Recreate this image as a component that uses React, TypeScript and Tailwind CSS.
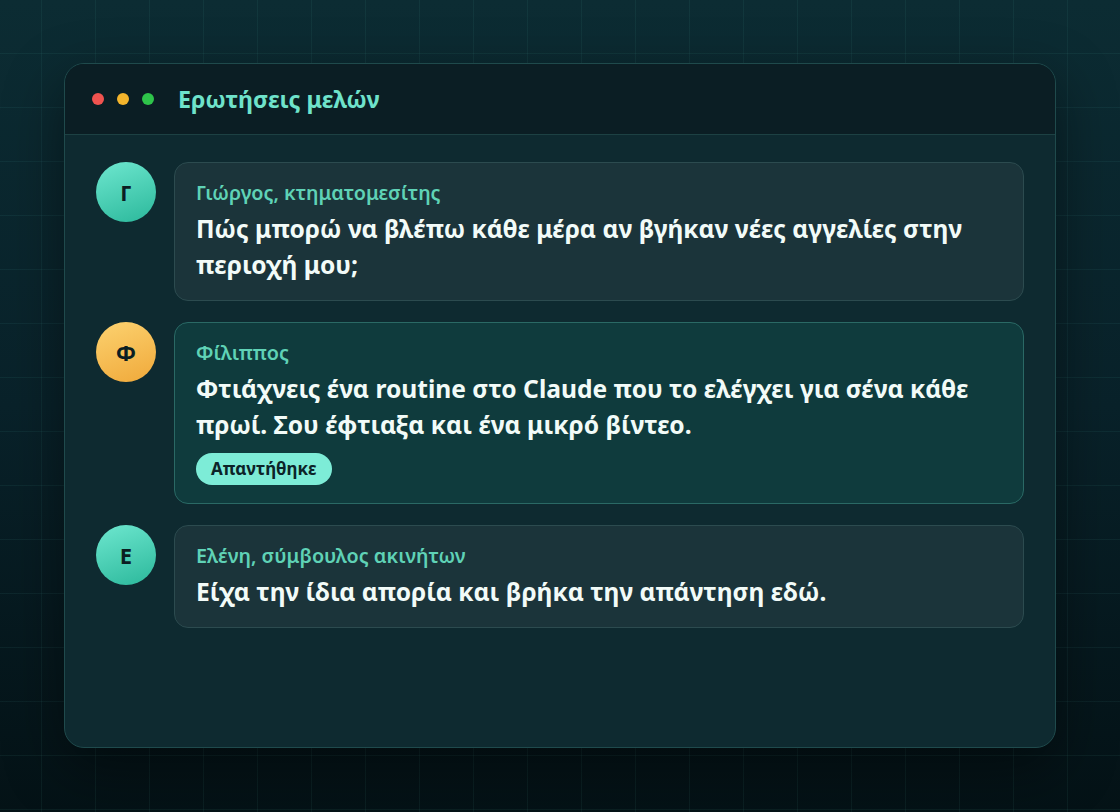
const questions = [
  {
    initial: "Γ",
    name: "Γιώργος, κτηματομεσίτης",
    text: "Πώς μπορώ να βλέπω κάθε μέρα αν βγήκαν νέες αγγελίες στην περιοχή μου;",
    avatar: "bg-[linear-gradient(160deg,#6ee7cf,#2bb89b)]",
    answered: false,
  },
  {
    initial: "Φ",
    name: "Φίλιππος",
    text: "Φτιάχνεις ένα routine στο Claude που το ελέγχει για σένα κάθε πρωί. Σου έφτιαξα και ένα μικρό βίντεο.",
    avatar: "bg-[linear-gradient(160deg,#fcd270,#f0a93a)]",
    answered: true,
  },
  {
    initial: "Ε",
    name: "Ελένη, σύμβουλος ακινήτων",
    text: "Είχα την ίδια απορία και βρήκα την απάντηση εδώ.",
    avatar: "bg-[linear-gradient(160deg,#6ee7cf,#2bb89b)]",
    answered: false,
  },
];

export default function App() {
  return (
    <div className="min-h-screen bg-[linear-gradient(180deg,#0c2c33_0%,#09222a_50%,#041216_100%)] font-['Noto_Sans',sans-serif]">
      <div className="min-h-screen w-full bg-[linear-gradient(rgba(94,200,190,0.07)_1px,transparent_1px),linear-gradient(90deg,rgba(94,200,190,0.07)_1px,transparent_1px)] bg-[size:54px_54px] bg-[position:-13px_-1px] px-[64px] py-[63px]">
        <div className="h-[685px] overflow-hidden rounded-[20px] border border-[#1f4a4c] bg-[#0e2a30] shadow-[0_20px_60px_rgba(0,0,0,0.45)]">
          <div className="flex h-[71px] items-center gap-[24px] border-b border-[#1d4143] bg-[#0b1e24] px-[27px]">
            <div className="flex items-center gap-[13px]">
              <span className="h-[12px] w-[12px] rounded-full bg-[#f0534f]" />
              <span className="h-[12px] w-[12px] rounded-full bg-[#f4b52c]" />
              <span className="h-[12px] w-[12px] rounded-full bg-[#2ec44a]" />
            </div>
            <h1 className="text-[23.3px] font-bold text-[#6fe3cb]">Ερωτήσεις μελών</h1>
          </div>

          <div className="flex flex-col gap-[21px] pl-[31px] pr-[31px] pt-[27px]">
            {questions.map((q) => (
              <div key={q.name} className="flex items-start gap-[18px]">
                <div
                  className={`flex h-[60px] w-[60px] shrink-0 items-center justify-center rounded-full text-[22px] font-bold text-[#0b1e22] ${q.avatar}`}
                >
                  {q.initial}
                </div>
                <div
                  className={`flex-1 rounded-[14px] border px-[21px] pt-[17px] ${
                    q.answered ? "border-[#2a6965] bg-[#0f3b3d] pb-[18px]" : "border-[#2c4b4f] bg-[#1b343a] pb-[17px]"
                  }`}
                >
                  <div className="text-[19.8px] font-semibold leading-[26px] text-[#5fd2b6]">{q.name}</div>
                  <p className="mt-[5px] text-[24.6px] font-bold leading-[36px] text-[#f2fbf8]">{q.text}</p>
                  {q.answered && (
                    <span className="mt-[10px] inline-flex h-[32px] items-center rounded-full bg-[#7decd7] px-[15px] text-[17px] font-bold text-[#0c2328]">
                      Απαντήθηκε
                    </span>
                  )}
                </div>
              </div>
            ))}
          </div>
        </div>
      </div>
    </div>
  );
}
